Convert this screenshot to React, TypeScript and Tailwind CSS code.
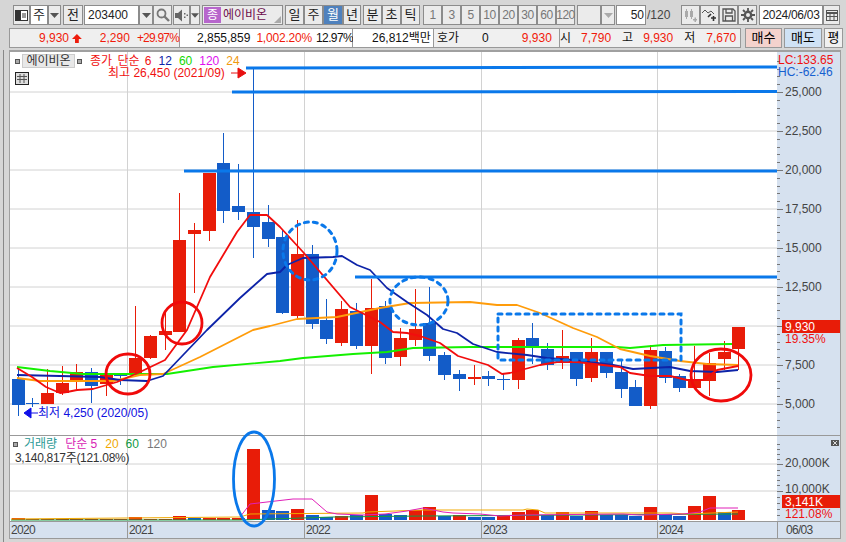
import React from "react";
import { twMerge } from "tailwind-merge";

const UP = "#e81c08";
const DOWN = "#135cc8";
const HLINE = "#0a78ea";

// [blue?, bodyTop, bodyBottom, wickTop, wickBottom]
const candles: [number, number, number, number, number][] = [
  [1, 379, 405, 367, 416], [1, 403, 404, 398, 407], [0, 393, 404, 369, 404], [0, 383, 393, 366, 395],
  [0, 372, 381, 364, 389], [1, 372, 386, 368, 403], [0, 374, 384, 373, 396], [1, 375, 376, 373, 385],
  [0, 358, 373, 306, 377], [0, 336, 358, 335, 359], [0, 331, 335, 310, 350], [0, 240, 332, 193, 332],
  [0, 230, 234, 223, 293], [0, 173, 231, 173, 241], [1, 163, 211, 133, 223], [1, 206, 212, 164, 220],
  [1, 212, 227, 68, 258], [1, 222, 239, 205, 247], [1, 237, 313, 230, 314], [0, 254, 316, 220, 318],
  [1, 254, 324, 245, 329], [1, 320, 339, 299, 344], [0, 309, 343, 301, 346], [1, 311, 346, 303, 349],
  [0, 308, 346, 279, 374], [1, 306, 358, 301, 364], [0, 338, 357, 328, 366], [0, 329, 340, 289, 346],
  [1, 323, 356, 287, 361], [1, 355, 375, 352, 380], [1, 374, 379, 370, 391], [0, 377, 379, 365, 385],
  [1, 376, 379, 371, 386], [1, 379, 380, 373, 390], [0, 340, 380, 338, 389], [1, 338, 347, 323, 364],
  [1, 349, 365, 343, 370], [0, 356, 363, 330, 369], [1, 352, 379, 352, 386], [0, 352, 378, 338, 382],
  [1, 352, 373, 352, 378], [1, 372, 389, 360, 398], [1, 387, 406, 380, 406], [0, 350, 406, 345, 409],
  [1, 351, 378, 347, 383], [1, 376, 388, 374, 392], [0, 379, 388, 346, 388], [0, 363, 381, 353, 396],
  [0, 352, 359, 341, 370], [0, 327, 349, 327, 370],
];

// [blue?, top]
const volumes: [number, number][] = [
  [0, 518], [0, 519], [0, 519], [0, 519], [0, 519], [0, 519], [0, 519], [0, 519],
  [0, 517], [0, 519], [0, 519], [0, 516], [1, 518], [0, 518], [0, 518], [0, 518],
  [0, 449], [1, 510], [1, 511], [0, 509], [1, 515], [1, 517], [0, 516], [1, 515],
  [0, 495], [1, 514], [1, 515], [0, 510], [0, 507], [1, 516], [0, 515], [1, 517],
  [1, 517], [0, 516], [0, 512], [0, 510], [1, 515], [0, 512], [1, 516], [0, 511],
  [1, 515], [1, 515], [1, 516], [0, 507], [1, 514], [1, 516], [0, 506], [0, 496],
  [1, 512], [0, 510],
];

const ma6 = "17,368 32,377 46,387 60,393 67,392 77,390 93,389 117,382 140,372 165,360 187,330 210,277 237,232 250,215 267,215 280,227 303,252 350,307 380,322 393,332 407,333 420,336 440,343 458,356 488,365 502,374 510,373 525,369 540,365 557,362 577,362 620,367 630,373 650,376 670,376 687,380 703,380 717,370 738,366";
const ma12 = "17,375 60,376 100,377 120,380 147,381 163,376 207,330 240,298 267,274 280,272 287,265 303,258 333,257 342,256 357,265 370,270 387,288 407,302 427,315 443,329 457,333 473,344 497,352 527,355 547,358 573,360 613,365 633,369 670,367 690,371 717,372 738,370";
const ma60 = "17,367 50,371 83,374 167,374 213,367 280,361 303,358 353,354 387,352 413,348 470,347 617,347 630,348 663,345 732,344";
const ma24 = "17,378 40,381 113,381 140,375 163,374 200,357 253,330 270,326 297,319 337,317 380,308 410,303 470,302 497,305 517,305 540,313 573,328 597,337 620,349 650,356 680,361 707,364 738,365";

const volMa5 = "240,517 250,504 267,502 293,499 312,499 327,512 337,514 363,515 385,514 407,511 423,508 443,512 453,513 480,514 500,516 523,515 623,514 640,515 683,514 700,512 710,508 738,508";
const volMa20 = "11,519 240,517 250,514 363,513 367,512 423,510 523,510 527,509 538,510 545,513 671,513 686,514 738,512";
const volMa60 = "11,520 240,520 333,517 423,516 738,514";

const priceGrid = [92, 131, 170, 209, 248, 287, 326, 365, 404];
const priceLabels: [string, number][] = [
  ["25,000", 92], ["22,500", 131], ["20,000", 170], ["17,500", 209], ["15,000", 248], ["12,500", 287], ["7,500", 365], ["5,000", 404],
];
const yearLines = [127.5, 304.5, 481.5, 657.5];
const candleX = (i: number) => 17.5 + i * 14.71;

function Btn({ className = "", children }: { className?: string; children?: React.ReactNode }) {
  return (
    <div
      className={twMerge(
        "flex h-[20px] shrink-0 items-center justify-center border border-[#8c8c8c] bg-[#ebebeb] text-[13px] text-[#222]",
        className,
      )}
    >
      {children}
    </div>
  );
}

function Caret({ dim = false }: { dim?: boolean }) {
  return (
    <svg width="9" height="5" viewBox="0 0 9 5">
      <path d="M0 0h9L4.5 5z" fill={dim ? "#aaa" : "#555"} />
    </svg>
  );
}

function Period({ label }: { label: string }) {
  return <Btn className="w-[19px] text-[12px] tracking-[-0.5px] text-[#777]">{label}</Btn>;
}

function Toolbar() {
  return (
    <div className="mt-[5px] flex h-[20px] items-center pl-[13px]">
      <Btn className="w-[17px]">
        <svg width="13" height="13" viewBox="0 0 13 13">
          <rect x="0.5" y="1.5" width="12" height="10" fill="#fff" stroke="#333" />
          <rect x="1" y="2" width="5" height="9" fill="#333" />
          <path d="M8 4v5M10 4v5" stroke="#333" />
        </svg>
      </Btn>
      <Btn className="w-[18px] bg-white">주</Btn>
      <Btn className="w-[13px]"><Caret /></Btn>
      <Btn className="ml-[2px] w-[20px]">전</Btn>
      <Btn className="ml-[1px] w-[55px] justify-start bg-white pl-[3px] text-[12px]">203400</Btn>
      <Btn className="w-[14px]"><Caret /></Btn>
      <Btn className="w-[19px]">
        <svg width="14" height="14" viewBox="0 0 14 14" fill="none" stroke="#777" strokeWidth="1.8">
          <circle cx="5.5" cy="5.5" r="4" />
          <path d="M8.5 8.5L13 13" strokeWidth="2.4" />
        </svg>
      </Btn>
      <Btn className="ml-[1px] w-[17px]">
        <svg width="13" height="13" viewBox="0 0 13 13" fill="#666">
          <path d="M0 4h3l4-3.500v12L3 9H0z" />
          <path d="M9 4h1.500v1.500H9zM9 7.500h1.500V9H9zM11.500 5.500H13V7h-1.500z" />
        </svg>
      </Btn>
      <Btn className="w-[10px]"><Caret /></Btn>
      <div className="relative ml-[2px] flex h-[20px] w-[81px] shrink-0 items-center border border-[#8c8c8c] bg-[#ebebeb] pl-[1px]">
        <div className="flex h-[16px] w-[17px] items-center justify-center bg-[#b766cc] text-[12px] text-white">종</div>
        <span className="ml-[2px] text-[12px] text-[#6e0b4c]">에이비온</span>
        <div className="absolute bottom-[1px] right-[1px] h-0 w-0 border-b-[7px] border-l-[7px] border-b-[#aaa] border-l-transparent" />
      </div>
      <Btn className="ml-[2px] w-[19px]">일</Btn>
      <Btn className="w-[19px]">주</Btn>
      <Btn className="w-[20px] bg-[#4f81bd] text-white">월</Btn>
      <Btn className="w-[18px]">년</Btn>
      <Btn className="ml-[2px] w-[19px]">분</Btn>
      <Btn className="w-[19px]">초</Btn>
      <Btn className="w-[19px]">틱</Btn>
      <div className="ml-[3px] flex">
        {["1", "3", "5", "10", "20", "30", "60", "120"].map((p) => (
          <Period key={p} label={p} />
        ))}
      </div>
      <Btn className="ml-[2px] w-[24px]" />
      <Btn className="w-[14px]"><Caret dim /></Btn>
      <Btn className="ml-[1px] w-[30px] justify-end bg-white pr-[1px] text-[12px]">50</Btn>
      <span className="ml-[1px] w-[34px] text-[12px] text-[#444]">/120</span>
      <Btn className="w-[19px]">
        <svg width="15" height="15" viewBox="0 0 15 15" fill="#aaa">
          <path d="M2 3h3v6H2zM7 3h3v6H7zM3 1h1v10H3zM8 1h1v10H8zM10 11h4v1.500h-4zM11.500 9.500H13v4.500h-1.500z" />
        </svg>
      </Btn>
      <Btn className="w-[19px]">
        <svg width="15" height="15" viewBox="0 0 15 15" fill="none" stroke="#555">
          <path d="M0 5l3-3 3 3 3-2 3 3" />
          <path d="M6 9l3-3M9 10h5M11.500 8v5" strokeWidth="1.600" stroke="#333" />
        </svg>
      </Btn>
      <Btn className="w-[19px]">
        <svg width="14" height="14" viewBox="0 0 14 14" fill="none" stroke="#555" strokeWidth="1.300">
          <path d="M1 1h10l2 2v10H1z" />
          <path d="M4 1v4h6V1M3.500 13V8h7v5" />
        </svg>
      </Btn>
      <Btn className="w-[19px]">
        <svg width="14" height="14" viewBox="0 0 14 14" fill="none" stroke="#555">
          <circle cx="7" cy="7" r="3.200" strokeWidth="2.400" />
          <path d="M7 0v3M7 11v3M0 7h3M11 7h3M2 2l2 2M10 10l2 2M12 2l-2 2M4 10l-2 2" strokeWidth="1.800" />
        </svg>
      </Btn>
      <Btn className="ml-[2px] w-[64px] bg-white text-[12px] tracking-[-0.3px]">2024/06/03</Btn>
      <Btn className="w-[17px]">
        <svg width="12" height="11" viewBox="0 0 12 11" fill="none" stroke="#555">
          <rect x="0.500" y="0.500" width="11" height="10" />
          <path d="M0 3h12" strokeWidth="2" />
          <path d="M4 3v8M8 3v8M0 6.500h12" />
        </svg>
      </Btn>
    </div>
  );
}

function InfoRow() {
  return (
    <div className="mt-[3px] flex h-[20px] items-center pl-[9px] text-[12px]">
      <div className="flex h-full w-[171px] shrink-0 items-center border border-[#999] bg-[#efefef] text-[#f01a0a]">
        <span className="ml-[29px]">9,930</span>
        <svg className="ml-[3px]" width="13" height="13" viewBox="0 0 13 13">
          <path d="M6.500 0.500L13 7H9v5.500H4V7H0z" fill="#ee1c0c" />
        </svg>
        <span className="ml-[18px]">2,290</span>
        <span className="ml-[7px] tracking-[-0.8px]">+29.97%</span>
      </div>
      <div className="flex h-full w-[173px] shrink-0 items-center border-y border-r border-[#999] bg-white">
        <span className="ml-[17px] text-[#111]">2,855,859</span>
        <span className="ml-[6px] tracking-[-0.2px] text-[#f01a0a]">1,002.20%</span>
        <span className="ml-[4px] tracking-[-0.6px] text-[#111]">12.97%</span>
      </div>
      <div className="flex h-full w-[81px] shrink-0 items-center border-y border-r border-[#999] bg-white pl-[19px] text-[#111]">26,812백만</div>
      <div className="flex h-full w-[126px] shrink-0 items-center border-y border-r border-[#999] bg-[#f0f0f0]">
        <span className="ml-[3px] text-[#111]">호가</span>
        <span className="ml-[23px] text-[#111]">0</span>
        <span className="ml-[33px] text-[#f01a0a]">9,930</span>
      </div>
      <div className="flex h-full w-[181px] shrink-0 items-center border-y border-r border-[#999] bg-[#f0f0f0]">
        <span className="text-[#111]">시</span>
        <span className="ml-[10px] text-[#f01a0a]">7,790</span>
        <span className="ml-[11px] text-[#111]">고</span>
        <span className="ml-[10px] text-[#f01a0a]">9,930</span>
        <span className="ml-[11px] text-[#111]">저</span>
        <span className="ml-[11px] text-[#f01a0a]">7,670</span>
      </div>
      <div className="ml-[4px] flex h-full w-[37px] shrink-0 items-center justify-center border border-[#999] bg-[#f4d2cd] text-[13px]">매수</div>
      <div className="ml-[2px] flex h-full w-[38px] shrink-0 items-center justify-center border border-[#999] bg-[#cfe2f5] text-[13px]">매도</div>
      <div className="ml-[2px] flex h-full w-[19px] shrink-0 items-center justify-center border border-[#999] bg-[#f0f0f0] text-[13px]">평</div>
    </div>
  );
}

function PricePlot() {
  return (
    <svg className="absolute inset-0 block" width="767" height="383" viewBox="10 52 767 383">
      {priceGrid.map((y) => (
        <line key={y} x1="10" x2="777" y1={y} y2={y} stroke="#d2d2d2" />
      ))}
      {yearLines.map((x) => (
        <line key={x} x1={x} x2={x} y1="52" y2="435" stroke="#d2d2d2" />
      ))}
      {candles.map(([blue, top, bottom, wt, wb], i) => {
        const x = Math.round(candleX(i)) + 0.5;
        const c = blue ? DOWN : UP;
        return (
          <g key={i}>
            <line x1={x} x2={x} y1={wt} y2={wb} stroke={c} />
            <rect x={x - 6.5} y={top} width="13" height={Math.max(bottom - top, 1)} fill={c} />
          </g>
        );
      })}
      <g fill="none" strokeWidth="1.800" strokeLinejoin="round">
        <polyline points={ma60} stroke="#14f000" />
        <polyline points={ma24} stroke="#ff9c0a" />
        <polyline points={ma12} stroke="#0d23a8" />
        <polyline points={ma6} stroke="#f20d0d" />
      </g>
      <g stroke={HLINE} strokeWidth="3">
        <line x1="246" x2="777" y1="68" y2="67" />
        <line x1="232" x2="777" y1="92" y2="91.500" />
        <line x1="184" x2="777" y1="171" y2="171" />
        <line x1="355" x2="777" y1="277" y2="277" />
      </g>
      <g fill="none" stroke={HLINE} strokeWidth="3" strokeDasharray="4 5" strokeLinecap="round">
        <ellipse cx="310" cy="251" rx="27" ry="29" />
        <ellipse cx="419" cy="301" rx="29" ry="24" />
        <rect x="498" y="314" width="183" height="46" />
      </g>
      <g fill="none" stroke="#f00a0a" strokeWidth="2.800">
        <ellipse cx="128" cy="374" rx="22" ry="20" />
        <ellipse cx="182" cy="323" rx="20" ry="21" />
        <ellipse cx="721" cy="375" rx="30" ry="26" />
      </g>
      <path d="M231 73h8M238 68l8 5-8 5z" fill="#e81010" stroke="#e81010" />
      <path d="M28 413h10M31 408l-7 5 7 5z" fill="#1010e8" stroke="#1010e8" />
    </svg>
  );
}

function VolumePlot() {
  return (
    <svg className="absolute inset-0 z-10 block overflow-visible" width="767" height="85" viewBox="10 436 767 85">
      <line x1="10" x2="777" y1="464" y2="464" stroke="#d2d2d2" />
      <line x1="10" x2="777" y1="491" y2="491" stroke="#d2d2d2" />
      {yearLines.map((x) => (
        <line key={x} x1={x} x2={x} y1="436" y2="521" stroke="#d2d2d2" />
      ))}
      {volumes.map(([blue, top], i) => (
        <rect key={i} x={Math.round(candleX(i)) - 6} y={top} width="13" height={520 - top} fill={blue ? DOWN : UP} />
      ))}
      <g fill="none">
        <polyline points={volMa60} stroke="#0f9a45" />
        <polyline points={volMa20} stroke="#f0a800" />
        <polyline points={volMa5} stroke="#e020b8" />
      </g>
      <ellipse cx="254" cy="479" rx="20.500" ry="47" fill="none" stroke={HLINE} strokeWidth="2.800" />
    </svg>
  );
}

function PriceAxis() {
  const ticks: number[] = [];
  for (let y = 92 - 31.2; y < 432; y += 7.8) ticks.push(Math.round(y) + 0.5);
  return (
    <div className="relative w-[63px] shrink-0 bg-[#d6e1ef]">
      <svg className="absolute inset-0 block" width="63" height="383" viewBox="0 52 63 383">
        {ticks.map((y) => {
          const major = priceGrid.some((g) => Math.abs(g - y) < 1);
          return <line key={y} x1="0" x2={major ? 6 : 3} y1={y} y2={y} stroke="#777" />;
        })}
      </svg>
      <span className="absolute left-[1px] top-[3px] text-[12px] leading-[11px] text-[#f01010]">LC:133.65</span>
      <span className="absolute left-[1px] top-[15px] text-[12px] leading-[11px] text-[#1560d0]">HC:-62.46</span>
      {priceLabels.map(([t, y]) => (
        <span key={t} className="absolute left-[8px] text-[12px] leading-[14px] text-[#444]" style={{ top: y - 52 - 7 }}>
          {t}
        </span>
      ))}
      <div className="absolute left-[5px] top-[268px] flex h-[13px] w-[58px] items-center bg-[#e81c08] pl-[3px] text-[12px] text-white">9,930</div>
      <span className="absolute left-[8px] top-[281px] text-[12px] leading-[13px] text-[#f01010]">19.35%</span>
    </div>
  );
}

function VolumeAxis() {
  const ticks = [444, 449, 454, 459, 464, 470, 475, 480, 485, 491, 497, 503, 509, 515];
  return (
    <div className="relative w-[63px] shrink-0 bg-[#d6e1ef]">
      <svg className="absolute inset-0 block" width="63" height="85" viewBox="0 436 63 85">
        {ticks.map((y) => (
          <line key={y} x1="0" x2={y === 464 || y === 491 ? 6 : 3} y1={y + 0.5} y2={y + 0.5} stroke="#777" />
        ))}
      </svg>
      <div className="absolute right-[1px] top-[4px] flex h-[6px] w-[8px] items-center justify-center bg-[#555]">
        <svg width="6" height="4" viewBox="0 0 6 4" stroke="#fff" strokeWidth="0.8">
          <path d="M1 0l4 4M5 0L1 4" />
        </svg>
      </div>
      <span className="absolute left-[8px] top-[20px] text-[12px] leading-[14px] text-[#444]">20,000K</span>
      <span className="absolute left-[8px] top-[47px] text-[12px] leading-[12px] text-[#444]">10,000K</span>
      <div className="absolute left-[5px] top-[59px] flex h-[13px] w-[58px] items-center bg-[#e81c08] pl-[3px] text-[12px] text-white">3,141K</div>
      <span className="absolute left-[8px] top-[72px] text-[12px] leading-[13px] text-[#f01010]">121.08%</span>
    </div>
  );
}

export default function App() {
  return (
    <div className="flex h-[542px] w-[846px] flex-col overflow-hidden bg-[#d6d6d6] text-[12px] [font-family:'Liberation_Sans','Noto_Sans_CJK_KR',sans-serif]">
      <Toolbar />
      <InfoRow />

      <div className="mt-[2px] flex">
        <div className="ml-[3px] h-[492px] w-[6px] border-l border-[#888]" />

        {/* chart frame */}
        <div className="flex h-[489px] w-[832px] flex-col border-x border-t-2 border-[#a0a0a0]">
          <div className="flex h-[383px] shrink-0">
            <div className="relative w-[767px] shrink-0 bg-white">
              <PricePlot />
              <div className="absolute left-[5px] top-[2px] flex items-center gap-[1px] leading-[12px]">
                <span className="h-[5px] w-[5px] border border-[#555] bg-[#aaa]" />
                <span className="ml-[1px] w-[53px] border border-[#ccc] bg-[#e8e8e8] text-center text-[#333]">에이비온</span>
                <span className="ml-[1px] h-[5px] w-[5px] border border-[#555] bg-[#aaa]" />
                <span className="ml-[7px] text-[#f01010] [word-spacing:2px]">종가 단순 6</span>
                <span className="ml-[6px] text-[#0d23a8]">12</span>
                <span className="ml-[6px] text-[#14d800]">60</span>
                <span className="ml-[6px] text-[#e010f0]">120</span>
                <span className="ml-[6px] text-[#f09a10]">24</span>
              </div>
              <div className="absolute left-[5px] top-[20px] flex h-[13px] w-[14px] items-center justify-center border border-[#222] bg-[#ddd]">
                <svg width="10" height="9" viewBox="0 0 10 9" fill="none" stroke="#555">
                  <path d="M0 2.500h10M0 5.500h10M3 0v9M7 0v9" />
                </svg>
              </div>
              <span className="absolute left-[98px] top-[16px] whitespace-nowrap leading-[11px] text-[#f01010]">최고 26,450 (2021/09)</span>
              <span className="absolute left-[28px] top-[354px] whitespace-nowrap leading-[14px] text-[#1010e0]">최저 4,250 (2020/05)</span>
            </div>
            <PriceAxis />
          </div>
          <div className="h-[1px] shrink-0 bg-[#999]" />
          <div className="flex h-[85px] shrink-0">
            <div className="relative w-[767px] shrink-0 bg-white">
              <VolumePlot />
              <div className="absolute left-[3px] top-[1px] z-20 flex items-center leading-[14px]">
                <span className="h-[5px] w-[5px] border border-[#555] bg-[#aaa]" />
                <span className="ml-[6px] text-[#2b9a96]">거래량</span>
                <span className="ml-[8px] text-[#d81cb4]">단순 5</span>
                <span className="ml-[8px] text-[#f0a800]">20</span>
                <span className="ml-[7px] text-[#0f9a45]">60</span>
                <span className="ml-[8px] text-[#777]">120</span>
              </div>
              <span className="absolute left-[5px] top-[15px] z-20 whitespace-nowrap leading-[14px] tracking-[-0.3px] text-[#333]">3,140,817주(121.08%)</span>
            </div>
            <VolumeAxis />
          </div>
          <div className="flex h-[18px] shrink-0 items-center border-y border-[#999] bg-[#d6e1ef] text-[12px] tracking-[-0.7px] text-[#444]">
            <div className="w-[117px] shrink-0 pl-[1px]">2020</div>
            <div className="w-[177px] shrink-0 border-l border-[#999] pl-[1px]">2021</div>
            <div className="w-[177px] shrink-0 border-l border-[#999] pl-[1px]">2022</div>
            <div className="w-[176px] shrink-0 border-l border-[#999] pl-[1px]">2023</div>
            <div className="w-[120px] shrink-0 border-l border-[#999] pl-[1px]">2024</div>
            <div className="flex-1 border-l border-[#999] pl-[8px]">06/03</div>
          </div>
        </div>
      </div>
    </div>
  );
}
